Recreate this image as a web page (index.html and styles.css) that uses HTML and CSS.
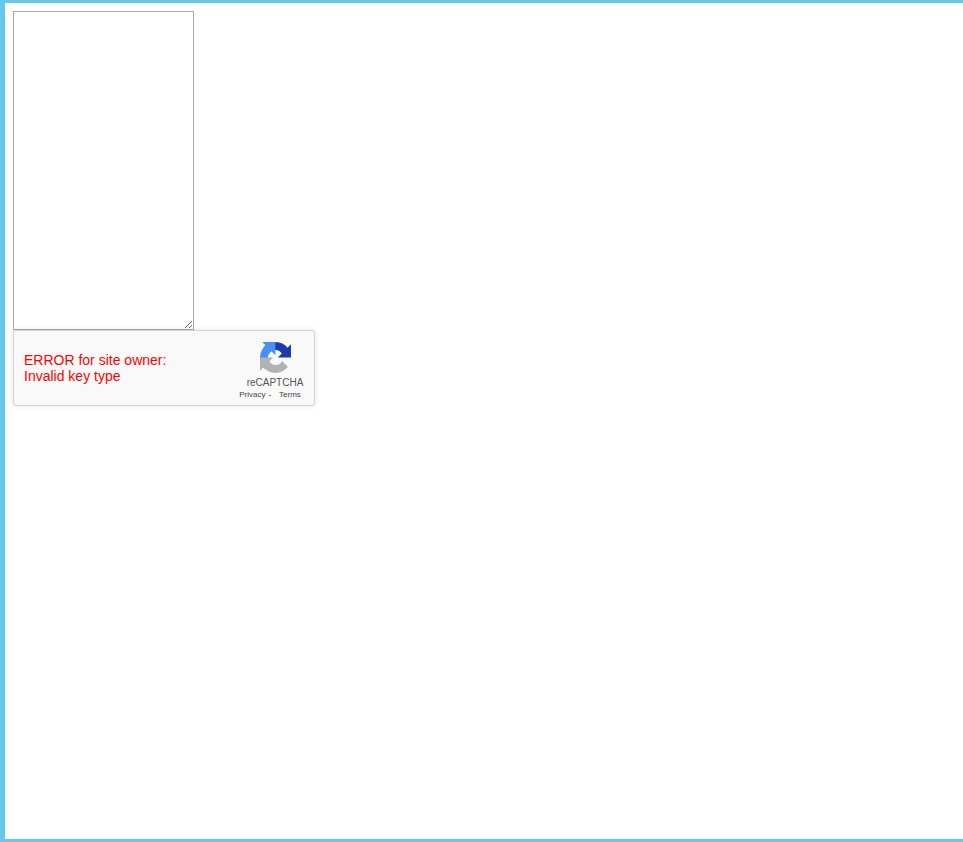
FILE: index.html
```html
<!DOCTYPE html>
<html lang="en">
<head>
<meta charset="utf-8">
<title>reCAPTCHA form</title>
<link rel="stylesheet" href="styles.css">
</head>
<body>
<main class="page">
  <textarea class="comment"></textarea>
  <div class="captcha">
    <div class="captcha-error">ERROR for site owner:<br>Invalid key type</div>
    <div class="captcha-brand">
      <svg class="captcha-logo" viewBox="0 0 64 64" width="31" height="31" aria-hidden="true">
        <path fill="#1c3aa9" d="M64 31.955l-.033-1.37V4.687l-7.16 7.16C50.948 4.674 42.033.093 32.05.093c-10.4 0-19.622 4.96-25.458 12.64l11.736 11.86a15.55 15.55 0 0 1 4.754-5.334c2.05-1.6 4.952-2.906 8.968-2.906.485 0 .86.057 1.135.163 4.976.393 9.288 3.14 11.828 7.124l-8.307 8.307c10.522-.04 22.4-.066 27.295.003"/>
        <path fill="#4a90f2" d="M31.862.094l-1.37.033H4.594l7.16 7.16C4.58 13.147 0 22.06 0 32.046c0 10.4 4.96 19.622 12.64 25.458l11.86-11.736a15.55 15.55 0 0 1-5.334-4.754c-1.6-2.05-2.906-4.952-2.906-8.968 0-.485.057-.86.163-1.135.393-4.976 3.14-9.288 7.124-11.828l8.307 8.307c-.04-10.522-.066-22.4.003-27.295"/>
        <path fill="#b2b2b2" d="M.001 32.045l.033 1.37v25.898l7.16-7.16C13.053 59.326 21.968 63.907 31.952 63.907c10.4 0 19.622-4.96 25.458-12.64L45.672 39.407a15.55 15.55 0 0 1-4.754 5.334c-2.05 1.6-4.952 2.906-8.968 2.906-.485 0-.86-.057-1.135-.163-4.976-.393-9.288-3.14-11.828-7.124l8.307-8.307c-10.522.04-22.4.066-27.295-.003"/>
      </svg>
      <div class="captcha-name">reCAPTCHA</div>
      <div class="captcha-links"><span>Privacy</span><span class="captcha-dash">-</span><span>Terms</span></div>
    </div>
  </div>
</main>
</body>
</html>
```

FILE: styles.css
```css
html, body {
  margin: 0;
  height: 100%;
}

body {
  box-sizing: border-box;
  background: #fff;
  border-style: solid;
  border-color: #66c9ea;
  border-width: 3px 0 3px 5px;
  font-family: "Liberation Sans", Arial, sans-serif;
}

.page {
  padding: 8px;
}

.comment {
  display: block;
  box-sizing: border-box;
  width: 181px;
  height: 319px;
  margin: 0;
  padding: 2px;
  background: #fff;
  border: 1px solid #a9a9a9;
  border-radius: 0;
}

.captcha {
  box-sizing: border-box;
  display: flex;
  justify-content: space-between;
  width: 302px;
  height: 76px;
  padding: 0 4px 0 10px;
  background: #f9f9f9;
  border: 1px solid #d3d3d3;
  border-radius: 3px;
  box-shadow: 0 0 4px 1px rgba(0, 0, 0, 0.08);
}

.captcha-error {
  margin-top: 21px;
  font-size: 14px;
  line-height: 16px;
  color: #f00;
}

.captcha-brand {
  display: flex;
  flex-direction: column;
  align-items: center;
  width: 70px;
  padding-top: 11px;
  color: #555;
}

.captcha-logo {
  display: block;
  margin-left: 1px;
}

.captcha-name {
  margin-top: 3px;
  font-size: 10px;
  line-height: 13px;
  white-space: nowrap;
}

.captcha-links {
  display: flex;
  margin: 1px 10px 0 0;
  font-size: 8px;
  line-height: 10px;
  white-space: nowrap;
  color: #444;
}

.captcha-dash {
  margin: 0 8px 0 3px;
  color: #000;
}
```
